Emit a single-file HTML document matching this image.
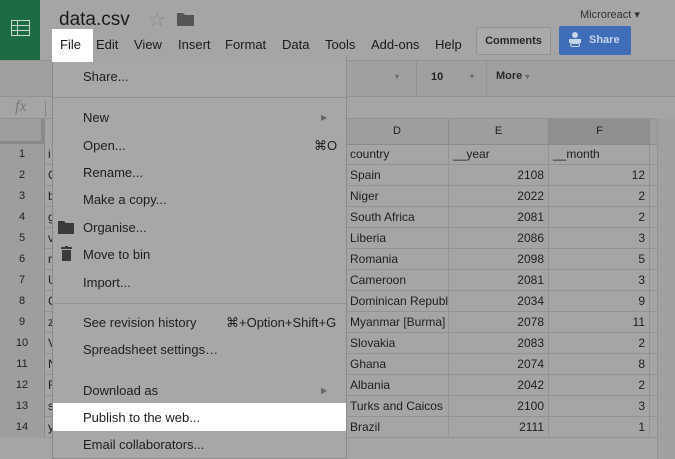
<!DOCTYPE html>
<html><head><style>
*{margin:0;padding:0;box-sizing:border-box}
body{width:675px;height:459px;overflow:hidden;background:#a5a5a5;font-family:"Liberation Sans",Arial,sans-serif;position:relative;color:#1e1e1e}
.a{position:absolute}
.menu span{position:absolute;top:37px;font-size:13px;color:#1a1a1a}
.mi{position:absolute;left:83px;font-size:13px;color:#1e1e1e}
.sep{position:absolute;left:54px;width:292px;height:1px;background:#939393}
.row{position:absolute;left:0;width:657px;height:21px;border-bottom:1px solid #939393;font-size:12px}
.rn{position:absolute;left:0;width:45px;height:21px;text-align:center;line-height:20px;font-size:11px;background:#9e9e9e;border-right:1px solid #8a8a8a}
.c{position:absolute;top:0;height:21px;line-height:20px;border-right:1px solid #939393;padding:0 4px;white-space:nowrap;overflow:hidden}
.pa{position:absolute;left:48px;top:0;line-height:20px}
</style></head><body>
<div class="a" style="left:0;top:0;width:40px;height:60px;background:#1d6b43"></div>
<svg class="a" style="left:11px;top:20px" width="19" height="16"><rect x="0.5" y="0.5" width="18" height="15" fill="none" stroke="#c9d8cf" stroke-width="1"/><path d="M0 5.5H19M0 10.5H19M6.5 0V16" stroke="#c9d8cf"/></svg>
<div class="a" style="left:59px;top:9px;font-size:19px;color:#1a1a1a">data.csv</div>
<div class="a" style="left:148px;top:7px;font-size:20px;color:#8a8a8a">☆</div>
<svg class="a" style="left:177px;top:12px" width="17" height="14"><path d="M0 1H6L8 3H17V14H0Z" fill="#555"/></svg>
<div class="a" style="left:580px;top:8px;font-size:11px;color:#333">Microreact ▾</div>
<div class="a" style="left:52px;top:29px;width:41px;height:33px;background:#fff"></div>
<div class="menu">
<span style="left:60px">File</span><span style="left:96px">Edit</span><span style="left:134px">View</span><span style="left:178px">Insert</span><span style="left:225px">Format</span><span style="left:282px">Data</span><span style="left:325px">Tools</span><span style="left:371px">Add-ons</span><span style="left:435px">Help</span>
</div>
<div class="a" style="left:476px;top:27px;width:75px;height:28px;border:1px solid #929292;border-radius:2px;background:#a9a9a9;font-size:11px;font-weight:bold;text-align:center;line-height:26px;color:#2a2a2a">Comments</div>
<div class="a" style="left:559px;top:26px;width:72px;height:29px;background:#3f6db8;border-radius:2px;font-size:11px;font-weight:bold;color:#c6d4ec;line-height:29px;padding-left:30px">Share</div>
<svg class="a" style="left:568px;top:31px" width="14" height="18"><circle cx="7" cy="4" r="3" fill="#c6d4ec"/><rect x="1" y="8" width="12" height="4" fill="#c6d4ec"/><rect x="2.5" y="12.5" width="9" height="3" rx="1.5" fill="none" stroke="#c6d4ec"/></svg>
<div class="a" style="left:0;top:60px;width:675px;height:1px;background:#939393"></div>
<div class="a" style="left:0;top:61px;width:675px;height:36px;background:#a0a0a0;border-bottom:1px solid #939393"></div>
<div class="a" style="left:395px;top:72px;font-size:8px;color:#666">▾</div>
<div class="a" style="left:416px;top:61px;width:1px;height:36px;background:#939393"></div>
<div class="a" style="left:431px;top:71px;font-size:11px;font-weight:bold;color:#222">10</div>
<div class="a" style="left:470px;top:72px;font-size:8px;color:#666">▾</div>
<div class="a" style="left:486px;top:61px;width:1px;height:36px;background:#939393"></div>
<div class="a" style="left:496px;top:70px;font-size:11px;font-weight:bold;color:#2a2a2a">More <span style="font-size:8px;color:#666">▾</span></div>
<div class="a" style="left:15px;top:98px;font-size:16px;font-style:italic;font-family:'Liberation Serif',serif;color:#777">fx</div>
<div class="a" style="left:45px;top:101px;width:1px;height:16px;background:#888"></div>
<div class="a" style="left:0;top:118px;width:657px;height:1px;background:#939393"></div>
<div class="a" style="left:0;top:119px;width:45px;height:26px;background:#9e9e9e;border-right:4px solid #8a8a8a;border-bottom:4px solid #8a8a8a"></div>
<div class="a" style="left:346px;top:119px;width:311px;height:26px;background:#9e9e9e;border-bottom:1px solid #8a8a8a;font-size:11px">
<div class="a" style="left:0;width:103px;height:25px;line-height:25px;text-align:center;border-right:1px solid #8a8a8a">D</div>
<div class="a" style="left:103px;width:100px;height:25px;line-height:25px;text-align:center;border-right:1px solid #8a8a8a">E</div>
<div class="a" style="left:203px;width:101px;height:25px;line-height:25px;text-align:center;background:#8f8f8f">F</div>
</div>
<div class="a" style="left:657px;top:119px;width:18px;height:340px;background:#a0a0a0;border-left:1px solid #939393"></div>

<div class="row" style="top:144px"><div class="rn">1</div><div class="pa">i</div><div class="c" style="left:346px;width:103px">country</div><div class="c" style="left:449px;width:100px">__year</div><div class="c" style="left:549px;width:101px">__month</div></div>
<div class="row" style="top:165px"><div class="rn">2</div><div class="pa">C</div><div class="c" style="left:346px;width:103px">Spain</div><div class="c" style="left:449px;width:100px;text-align:right">2108</div><div class="c" style="left:549px;width:101px;text-align:right">12</div></div>
<div class="row" style="top:186px"><div class="rn">3</div><div class="pa">b</div><div class="c" style="left:346px;width:103px">Niger</div><div class="c" style="left:449px;width:100px;text-align:right">2022</div><div class="c" style="left:549px;width:101px;text-align:right">2</div></div>
<div class="row" style="top:207px"><div class="rn">4</div><div class="pa">g</div><div class="c" style="left:346px;width:103px">South Africa</div><div class="c" style="left:449px;width:100px;text-align:right">2081</div><div class="c" style="left:549px;width:101px;text-align:right">2</div></div>
<div class="row" style="top:228px"><div class="rn">5</div><div class="pa">v</div><div class="c" style="left:346px;width:103px">Liberia</div><div class="c" style="left:449px;width:100px;text-align:right">2086</div><div class="c" style="left:549px;width:101px;text-align:right">3</div></div>
<div class="row" style="top:249px"><div class="rn">6</div><div class="pa">r</div><div class="c" style="left:346px;width:103px">Romania</div><div class="c" style="left:449px;width:100px;text-align:right">2098</div><div class="c" style="left:549px;width:101px;text-align:right">5</div></div>
<div class="row" style="top:270px"><div class="rn">7</div><div class="pa">U</div><div class="c" style="left:346px;width:103px">Cameroon</div><div class="c" style="left:449px;width:100px;text-align:right">2081</div><div class="c" style="left:549px;width:101px;text-align:right">3</div></div>
<div class="row" style="top:291px"><div class="rn">8</div><div class="pa">C</div><div class="c" style="left:346px;width:103px">Dominican Republic</div><div class="c" style="left:449px;width:100px;text-align:right">2034</div><div class="c" style="left:549px;width:101px;text-align:right">9</div></div>
<div class="row" style="top:312px"><div class="rn">9</div><div class="pa">z</div><div class="c" style="left:346px;width:103px">Myanmar [Burma]</div><div class="c" style="left:449px;width:100px;text-align:right">2078</div><div class="c" style="left:549px;width:101px;text-align:right">11</div></div>
<div class="row" style="top:333px"><div class="rn">10</div><div class="pa">V</div><div class="c" style="left:346px;width:103px">Slovakia</div><div class="c" style="left:449px;width:100px;text-align:right">2083</div><div class="c" style="left:549px;width:101px;text-align:right">2</div></div>
<div class="row" style="top:354px"><div class="rn">11</div><div class="pa">N</div><div class="c" style="left:346px;width:103px">Ghana</div><div class="c" style="left:449px;width:100px;text-align:right">2074</div><div class="c" style="left:549px;width:101px;text-align:right">8</div></div>
<div class="row" style="top:375px"><div class="rn">12</div><div class="pa">F</div><div class="c" style="left:346px;width:103px">Albania</div><div class="c" style="left:449px;width:100px;text-align:right">2042</div><div class="c" style="left:549px;width:101px;text-align:right">2</div></div>
<div class="row" style="top:396px"><div class="rn">13</div><div class="pa">s</div><div class="c" style="left:346px;width:103px">Turks and Caicos</div><div class="c" style="left:449px;width:100px;text-align:right">2100</div><div class="c" style="left:549px;width:101px;text-align:right">3</div></div>
<div class="row" style="top:417px"><div class="rn">14</div><div class="pa">y</div><div class="c" style="left:346px;width:103px">Brazil</div><div class="c" style="left:449px;width:100px;text-align:right">2111</div><div class="c" style="left:549px;width:101px;text-align:right">1</div></div>

<div class="a" style="left:52px;top:57px;width:295px;height:402px;background:#a7a7a7;border:1px solid #8a8a8a;border-top:none"></div>
<div class="a" style="left:52px;top:57px;width:41px;height:5px;background:#fff"></div>
<div class="a" style="left:53px;top:403px;width:293px;height:28px;background:#fff"></div>
<div class="mi" style="top:69px">Share...</div>
<div class="sep" style="top:97px"></div>
<div class="mi" style="top:110px">New</div><div class="a" style="left:321px;top:113px;font-size:8px;color:#666">▶</div>
<div class="mi" style="top:138px">Open...</div><div class="a" style="left:314px;top:138px;font-size:13px">⌘O</div>
<div class="mi" style="top:165px">Rename...</div>
<div class="mi" style="top:192px">Make a copy...</div>
<svg class="a" style="left:58px;top:221px" width="16" height="13"><path d="M0 0H6L8 2H16V13H0Z" fill="#3a3a3a"/></svg>
<div class="mi" style="top:220px">Organise...</div>
<svg class="a" style="left:61px;top:246px" width="11" height="15"><rect x="0" y="1" width="11" height="2" fill="#3a3a3a"/><rect x="4" y="0" width="3" height="2" fill="#3a3a3a"/><rect x="1" y="4" width="9" height="11" fill="#3a3a3a"/></svg>
<div class="mi" style="top:247px">Move to bin</div>
<div class="mi" style="top:275px">Import...</div>
<div class="sep" style="top:303px"></div>
<div class="mi" style="top:315px">See revision history</div><div class="a" style="left:226px;top:315px;font-size:13px">⌘+Option+Shift+G</div>
<div class="mi" style="top:342px">Spreadsheet settings…</div>
<div class="mi" style="top:383px">Download as</div><div class="a" style="left:321px;top:386px;font-size:8px;color:#666">▶</div>
<div class="mi" style="top:410px">Publish to the web...</div>
<div class="mi" style="top:437px">Email collaborators...</div>
</body></html>
